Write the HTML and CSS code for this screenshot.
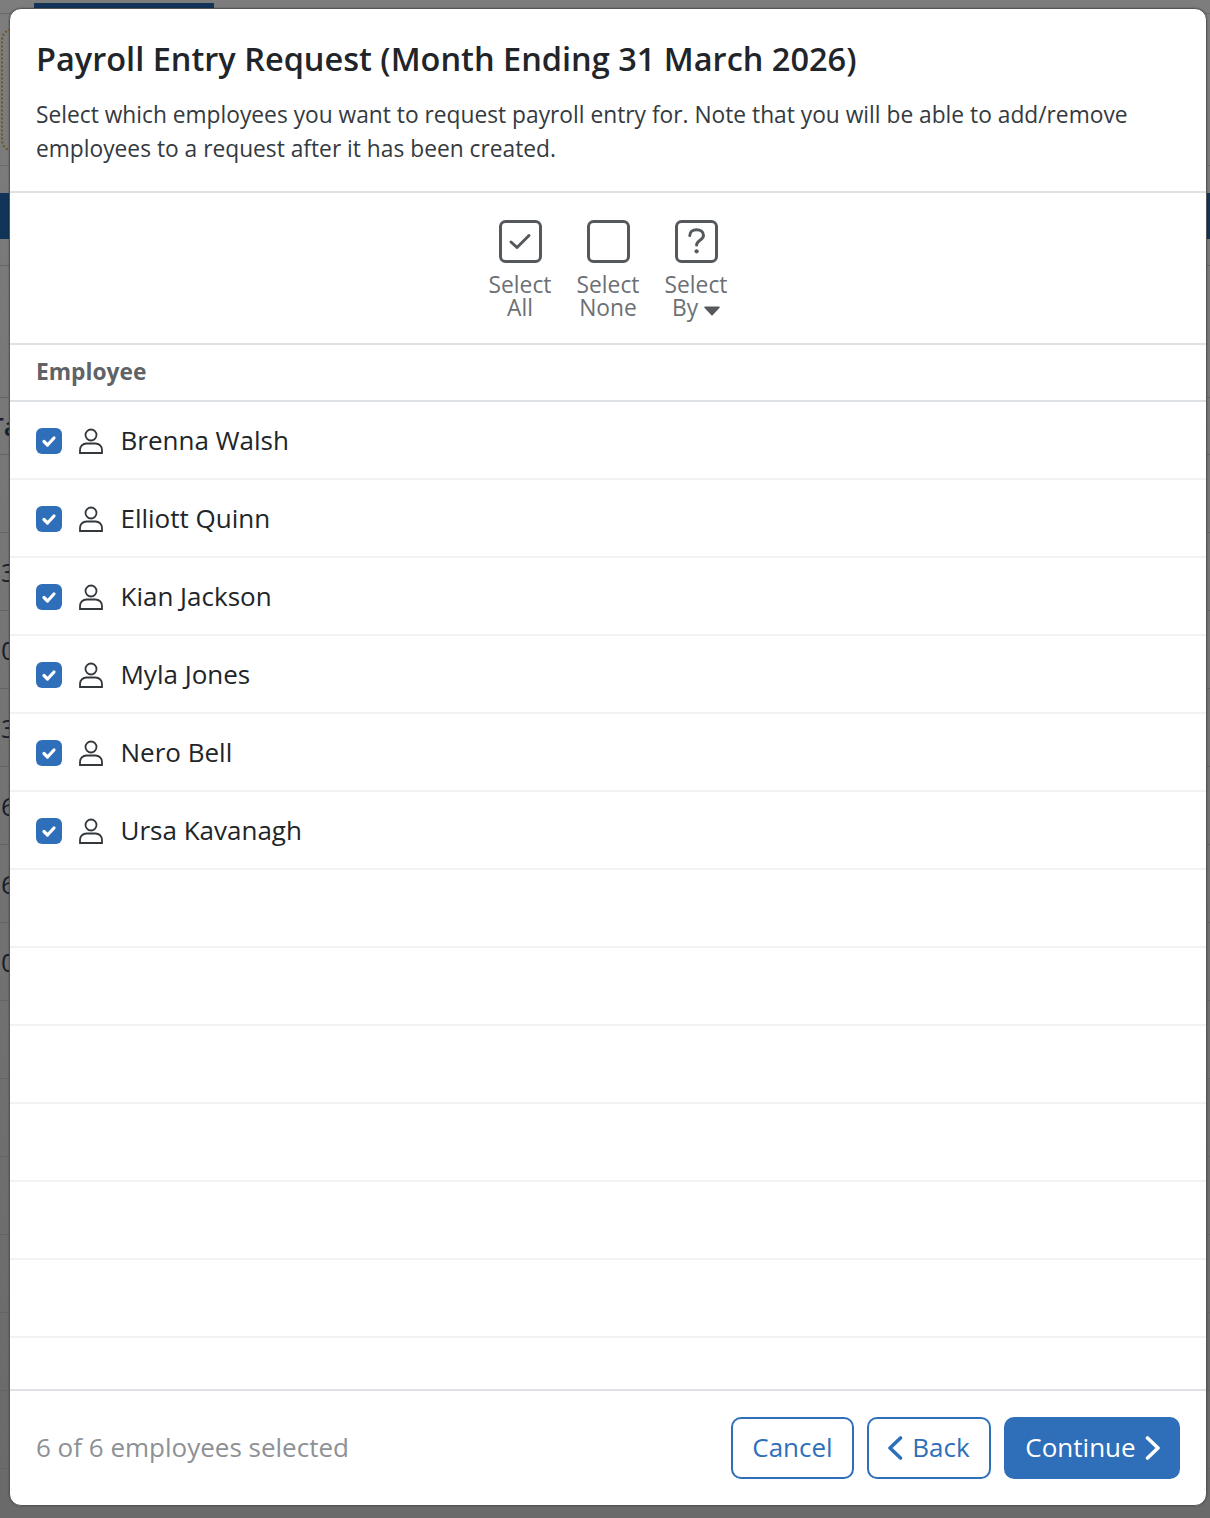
FILE: index.html
```html
<!DOCTYPE html>
<html lang="en">
<head>
<meta charset="utf-8">
<title>Payroll Entry Request</title>
<link rel="stylesheet" href="styles.css">
</head>
<body>
<div class="backdrop">
  <div class="bg-tab"></div>
  <div class="bg-rule bg-rule-top"></div>
  <div class="bg-dotted"></div>
  <div class="bg-rule bg-rule-mid"></div>
  <div class="bg-band"></div>
  <div class="bg-rows">
    <div class="bg-row bg-row-spacer"></div>
    <div class="bg-row bg-row-head"><span>Ta</span></div>
    <div class="bg-row"></div>
    <div class="bg-row"><span>3</span></div>
    <div class="bg-row"><span>0</span></div>
    <div class="bg-row"><span>3</span></div>
    <div class="bg-row"><span>6</span></div>
    <div class="bg-row"><span>6</span></div>
    <div class="bg-row"><span>0</span></div>
    <div class="bg-row"></div>
    <div class="bg-row"></div>
    <div class="bg-row"></div>
    <div class="bg-row"></div>
    <div class="bg-row"></div>
    <div class="bg-row"></div>
    <div class="bg-row"></div>
  </div>
</div>
<main class="modal">
  <header class="modal-head">
    <h1>Payroll Entry Request (Month Ending 31 March 2026)</h1>
    <p>Select which employees you want to request payroll entry for. Note that you will be able to add/remove employees to a request after it has been created.</p>
  </header>
  <div class="toolbar">
    <button class="tool">
      <svg viewBox="0 0 43 43" class="tool-icon"><rect x="1.500" y="1.500" width="40" height="40" rx="5"/><path d="M12 22l6 5.500 12-12"/></svg>
      <span>Select<br>All</span>
    </button>
    <button class="tool">
      <svg viewBox="0 0 43 43" class="tool-icon"><rect x="1.500" y="1.500" width="40" height="40" rx="5"/></svg>
      <span>Select<br>None</span>
    </button>
    <button class="tool">
      <svg viewBox="0 0 43 43" class="tool-icon"><rect x="1.500" y="1.500" width="40" height="40" rx="5"/><path d="M14.800 15.500c0-3.800 3-5.800 6.800-5.800s6.900 2.300 6.900 5.800c0 4.800-6.900 4.800-6.900 9.500"/><circle class="dot" cx="21.600" cy="31.300" r="2.100"/></svg>
      <span>Select<br>By <svg class="caret" viewBox="0 0 16 10"><path d="M1 .5h14a.8.800 0 0 1 .6 1.300L8.600 9.200a.8.800 0 0 1-1.200 0L.4 1.800A.8.800 0 0 1 1 .5z"/></svg></span>
    </button>
  </div>
  <div class="thead">Employee</div>
  <ul class="rows">
    <li class="row"><span class="check"><svg viewBox="0 0 26 26"><path d="M8 13.500l3.500 3.500 6.500-7"/></svg></span><svg class="person" viewBox="0 0 24 26"><circle cx="12" cy="7" r="5.500"/><path d="M1 25v-3c0-4 3-6.500 6.500-6.500h9c3.500 0 6.500 2.500 6.500 6.500v3z"/></svg><span>Brenna Walsh</span></li>
    <li class="row"><span class="check"><svg viewBox="0 0 26 26"><path d="M8 13.500l3.500 3.500 6.500-7"/></svg></span><svg class="person" viewBox="0 0 24 26"><circle cx="12" cy="7" r="5.500"/><path d="M1 25v-3c0-4 3-6.500 6.500-6.500h9c3.500 0 6.500 2.500 6.500 6.500v3z"/></svg><span>Elliott Quinn</span></li>
    <li class="row"><span class="check"><svg viewBox="0 0 26 26"><path d="M8 13.500l3.500 3.500 6.500-7"/></svg></span><svg class="person" viewBox="0 0 24 26"><circle cx="12" cy="7" r="5.500"/><path d="M1 25v-3c0-4 3-6.500 6.500-6.500h9c3.500 0 6.500 2.500 6.500 6.500v3z"/></svg><span>Kian Jackson</span></li>
    <li class="row"><span class="check"><svg viewBox="0 0 26 26"><path d="M8 13.500l3.500 3.500 6.500-7"/></svg></span><svg class="person" viewBox="0 0 24 26"><circle cx="12" cy="7" r="5.500"/><path d="M1 25v-3c0-4 3-6.500 6.500-6.500h9c3.500 0 6.500 2.500 6.500 6.500v3z"/></svg><span>Myla Jones</span></li>
    <li class="row"><span class="check"><svg viewBox="0 0 26 26"><path d="M8 13.500l3.500 3.500 6.500-7"/></svg></span><svg class="person" viewBox="0 0 24 26"><circle cx="12" cy="7" r="5.500"/><path d="M1 25v-3c0-4 3-6.500 6.500-6.500h9c3.500 0 6.500 2.500 6.500 6.500v3z"/></svg><span>Nero Bell</span></li>
    <li class="row"><span class="check"><svg viewBox="0 0 26 26"><path d="M8 13.500l3.500 3.500 6.500-7"/></svg></span><svg class="person" viewBox="0 0 24 26"><circle cx="12" cy="7" r="5.500"/><path d="M1 25v-3c0-4 3-6.500 6.500-6.500h9c3.500 0 6.500 2.500 6.500 6.500v3z"/></svg><span>Ursa Kavanagh</span></li>
    <li class="row"></li>
    <li class="row"></li>
    <li class="row"></li>
    <li class="row"></li>
    <li class="row"></li>
    <li class="row"></li>
  </ul>
  <footer class="foot">
    <span class="count">6 of 6 employees selected</span>
    <div class="actions">
      <button class="btn btn-cancel">Cancel</button>
      <button class="btn btn-back"><svg class="chev" viewBox="0 0 16 24"><path d="M13.500 2L3 12l10.500 10"/></svg>Back</button>
      <button class="btn btn-primary">Continue<svg class="chev" viewBox="0 0 16 24"><path d="M2.500 2L13 12 2.500 22"/></svg></button>
    </div>
  </footer>
</main>
</body>
</html>
```
FILE: styles.css
```css
* { box-sizing: border-box; }
html, body { margin: 0; height: 1518px; overflow: hidden; }
body {
  position: relative;
  width: 1210px;
  font-family: "Open Sans", "Noto Sans", sans-serif;
  color: #212529;
  background: #6f6f6f;
}
.backdrop {
  height: 1518px;
  padding-top: 3px;
  overflow: hidden;
  background: linear-gradient(#7d7d7d, #6a6a6a);
}
.bg-tab { width: 180px; height: 6px; margin-left: 34px; background: #133459; }
.bg-rule { height: 1px; background: #6a6a6a; }
.bg-rule-top { margin-top: 4px; }
.bg-rule-mid { margin-top: 13px; }
.bg-dotted {
  width: 30px;
  height: 124px;
  margin: 14px 0 0 1px;
  border: 2px dotted #6d5a1e;
  border-radius: 12px;
}
.bg-band { height: 46px; margin-top: 27px; background: #133459; }
.bg-rows { margin-top: 26px; border-top: 1px solid #646464; }
.bg-row {
  height: 78px;
  border-bottom: 1px solid #646464;
  display: flex;
  align-items: center;
  font-size: 26px;
  color: #16202c;
  padding-left: 1px;
  white-space: nowrap;
}
.bg-row-spacer { height: 132px; }
.bg-row-head { height: 57px; font-weight: 600; }
.bg-row-head span { margin-left: -12px; }
.modal {
  position: absolute;
  left: 9px;
  top: 8px;
  width: 1198px;
  height: 1498px;
  display: flex;
  flex-direction: column;
  overflow: hidden;
  background: #fff;
  border: 1px solid #555;
  border-radius: 12px;
  box-shadow: 0 0 2px rgba(0, 0, 0, .35);
}
.modal-head {
  height: 184px;
  flex: none;
  padding: 28px 26px 0;
  border-bottom: 2px solid #dee2e6;
}
h1 {
  margin: 0;
  font-size: 32.500px;
  line-height: 44px;
  font-weight: 600;
}
.modal-head p {
  margin: 17px 0 0;
  font-size: 22.750px;
  line-height: 34px;
  color: #343a40;
}
.toolbar {
  height: 152px;
  flex: none;
  display: flex;
  justify-content: center;
  padding-top: 27px;
  border-bottom: 2px solid #dee2e6;
}
.tool {
  width: 88px;
  height: 110px;
  padding: 0;
  border: 0;
  background: none;
  font: inherit;
  font-size: 22.750px;
  line-height: 23px;
  color: #6c7074;
  display: flex;
  flex-direction: column;
  align-items: center;
}
.tool-icon { width: 43px; height: 43px; margin-bottom: 10px; display: block; flex: none; }
.tool-icon rect, .tool-icon path { fill: none; stroke: #55595d; stroke-width: 3; stroke-linecap: round; stroke-linejoin: round; }
.tool-icon .dot { fill: #55595d; }
.caret { width: 16px; height: 10px; fill: #55595d; }
.thead {
  height: 57px;
  flex: none;
  padding: 0 0 3px 26px;
  display: flex;
  align-items: center;
  font-size: 22.750px;
  font-weight: 700;
  color: #5f6367;
  border-bottom: 2px solid #dee2e6;
}
.rows { list-style: none; margin: 0; padding: 0; flex: 1; overflow: hidden; }
.row {
  height: 78px;
  display: flex;
  align-items: center;
  padding-left: 26px;
  border-bottom: 2px solid #f1f2f3;
  font-size: 26px;
}
.check {
  width: 26px;
  height: 26px;
  margin-top: 2px;
  border-radius: 6px;
  background: #2f6fba;
  display: block;
  flex: none;
}
.check svg { display: block; width: 26px; height: 26px; }
.check path { fill: none; stroke: #fff; stroke-width: 3.200; stroke-linecap: round; stroke-linejoin: round; }
.person { width: 24px; height: 26px; margin: 1px 17.200px 0 17.300px; fill: none; stroke: #33383d; stroke-width: 1.800; flex: none; }
.foot {
  height: 116px;
  flex: none;
  display: flex;
  align-items: center;
  justify-content: space-between;
  padding: 0 26px;
  border-top: 2px solid #dee2e6;
}
.count { font-size: 26px; color: #8d9195; padding-bottom: 2px; }
.actions { display: flex; gap: 13px; }
.btn {
  height: 62px;
  padding: 0 0 2px;
  display: flex;
  align-items: center;
  justify-content: center;
  gap: 9px;
  font: inherit;
  font-size: 26px;
  color: #2f6fba;
  background: #fff;
  border: 2px solid #2f6fba;
  border-radius: 10px;
}
.btn-cancel { width: 123px; }
.btn-back { width: 124px; padding-right: 1px; }
.btn-primary { width: 176px; padding-left: 2px; background: #2f6fba; color: #fff; }
.chev { width: 16px; height: 24px; margin-top: 2px; fill: none; stroke: currentColor; stroke-width: 3.600; stroke-linecap: round; stroke-linejoin: round; }
```
